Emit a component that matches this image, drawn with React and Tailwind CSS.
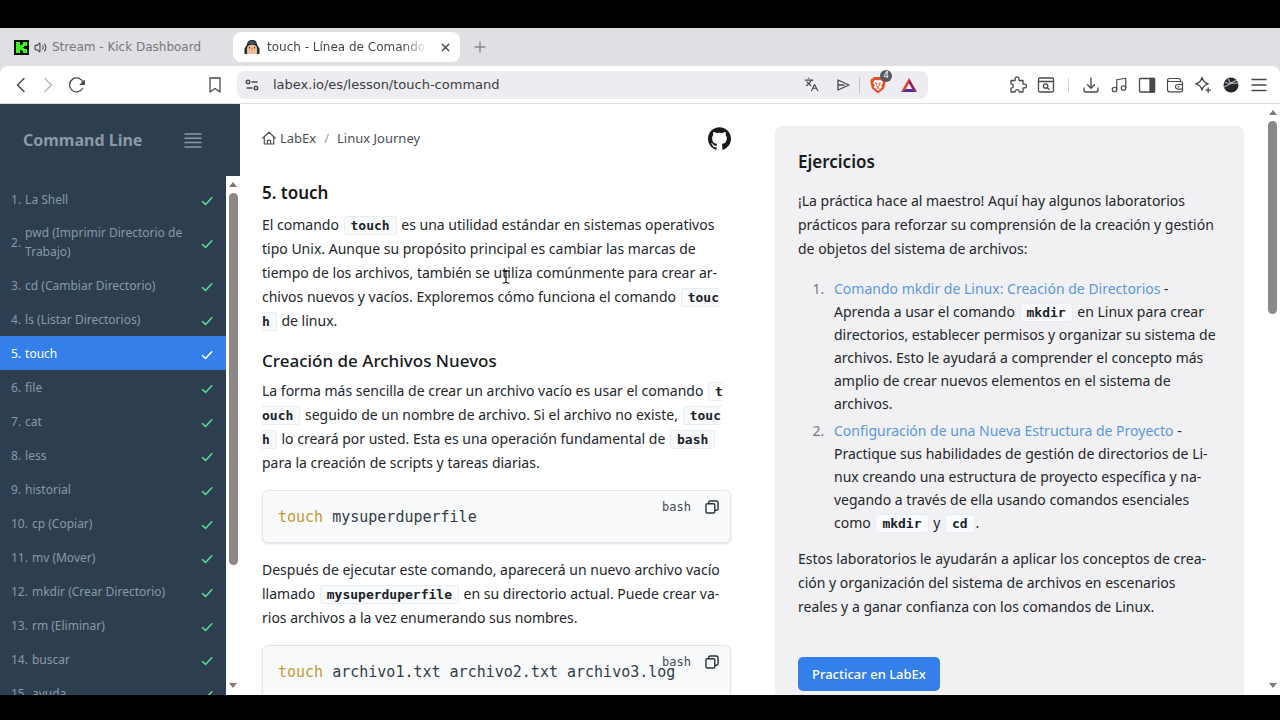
import { useState } from 'react';
import clsx from 'clsx';
import { Languages, Music, Volume2, X } from 'lucide-react';
import { SiGithub } from 'react-icons/si';

const lessons = [
  'La Shell',
  'pwd (Imprimir Directorio de Trabajo)',
  'cd (Cambiar Directorio)',
  'ls (Listar Directorios)',
  'touch',
  'file',
  'cat',
  'less',
  'historial',
  'cp (Copiar)',
  'mv (Mover)',
  'mkdir (Crear Directorio)',
  'rm (Eliminar)',
  'buscar',
  'ayuda',
];

const strokeProps = {
  fill: 'none',
  stroke: 'currentColor',
  strokeLinecap: 'round',
  strokeLinejoin: 'round',
  'aria-hidden': true,
};

function KickIcon() {
  return (
    <svg viewBox="0 0 15 15" className="size-[15px] shrink-0" shapeRendering="crispEdges" aria-hidden="true">
      <rect width="15" height="15" fill="#061206" />
      <g fill="#3fef1e">
        <rect x="2" y="2" width="4" height="11" />
        <rect x="6" y="5" width="3" height="5" />
        <rect x="8" y="4" width="2" height="3" />
        <rect x="8" y="8" width="2" height="3" />
        <rect x="9" y="2" width="4" height="4" />
        <rect x="9" y="9" width="4" height="4" />
      </g>
    </svg>
  );
}

function LabExIcon() {
  return (
    <svg viewBox="0 0 16 16" className="size-4 shrink-0" aria-hidden="true">
      <path d="M3 5.500C3 2.500 5 1 8 1s5 1.500 5 4.500l2.500 4V15H.5V9.500z" fill="#22282e" />
      <path d="M4 5c.5-2 2-3 4-3s3.500 1 4 3z" fill="#35586c" />
      <path d="M3 15V9.500C3 7.200 4.800 5.800 8 5.800s5 1.400 5 3.700V15z" fill="#f0bc98" />
      <path d="M6.800 9.500h2.400L8 11z" fill="#e0672b" />
      <circle cx="5.500" cy="8.700" r=".7" fill="#222" />
      <circle cx="10.500" cy="8.700" r=".7" fill="#222" />
    </svg>
  );
}

function BraveIcon() {
  return (
    <svg viewBox="0 0 16 18" className="h-[18px] w-4" aria-hidden="true">
      <path d="M4 1h8l1.500 1.500 1.500.5.800 2.500-1.800 7L8 17.500 2 12.500.2 5.500 1 3l1.500-.5z" fill="#e8502b" />
      <path d="M4.200 4.500l2.300-.5L8 4.500 9.500 4l2.300.5 1.200 2.300-1.800 2.700.8 2L8 14.700 4 11.500l.8-2L3 6.800z" fill="#fff" />
      <path d="M5 7l2 .5-.5 2L8 11l1.500-1.500-.5-2 2-.5M6.500 12.500L8 11.700l1.500.8" fill="none" stroke="#e8502b" />
    </svg>
  );
}

function BatIcon() {
  return (
    <svg viewBox="0 0 18 16" className="h-4 w-[18px]" aria-hidden="true">
      <path d="M9 1L1 15l4.800-3L9 6.200z" fill="#e0402c" />
      <path d="M9 1l8 14-4.800-3L9 6.200z" fill="#8e2060" />
      <path d="M1 15h16l-4.800-3H5.800z" fill="#5a2a92" />
    </svg>
  );
}

function PuzzleIcon() {
  return (
    <svg viewBox="0 0 18 18" className="size-[18px]" strokeWidth="1.300" {...strokeProps}>
      <path d="M2 4.500h3.700c.6 0 .6-.7.500-1.200a1.900 1.900 0 1 1 3.700 0c-.1.500 0 1.200.6 1.200H14v3.200c0 .6.700.6 1.200.5a1.900 1.900 0 1 1 0 3.700c-.5-.1-1.200 0-1.200.6V16h-3.300c-.6 0-.6-.5-.6-.9a1.900 1.900 0 0 0-3.700 0c0 .4-.1.900-.7.900H2v-3.500c0-.6.500-.6.900-.6a1.900 1.900 0 0 0 0-3.700c-.4 0-.9 0-.9-.6z" />
    </svg>
  );
}

function FindIcon() {
  return (
    <svg viewBox="0 0 18 18" className="size-[18px]" strokeWidth="1.300" {...strokeProps}>
      <rect x="1.500" y="2" width="15" height="14" rx="1.500" />
      <path d="M1.500 5.500h15M10.200 11.700l1.800 1.800" />
      <circle cx="8.600" cy="10" r="2.200" />
    </svg>
  );
}

function DownloadIcon() {
  return (
    <svg viewBox="0 0 18 18" className="size-[18px]" strokeWidth="1.300" {...strokeProps}>
      <path d="M9 2v10M5.500 8.700L9 12.200l3.500-3.500M2 12v2c0 1.300.7 2 2 2h10c1.300 0 2-.7 2-2v-2" />
    </svg>
  );
}

function SidePanelIcon() {
  return (
    <svg viewBox="0 0 18 18" className="size-[18px]" strokeWidth="1.300" {...strokeProps}>
      <rect x="1.500" y="2.500" width="15" height="13.500" rx="1" />
      <rect x="12" y="2.500" width="4.500" height="13.500" fill="currentColor" />
    </svg>
  );
}

function WalletIcon() {
  return (
    <svg viewBox="0 0 18 18" className="size-[18px]" strokeWidth="1.200" {...strokeProps}>
      <path d="M14.500 5.500V4.500c0-1.300-.8-2-2-2h-9C2.400 2.500 1.500 3.200 1.500 4.200v9.300c0 1.400.8 2.300 2.200 2.300H15c1 0 1.500-.6 1.500-1.500V7c0-1-.5-1.500-1.500-1.500H3.300c-1 0-1.600-.5-1.800-1.300" />
      <path d="M16.500 8.500h-4.700a2.300 2.300 0 1 0 0 4.600h4.700M12 10.800h1" />
    </svg>
  );
}

function SparkleIcon() {
  return (
    <svg viewBox="0 0 18 18" className="size-[18px]" strokeWidth="1.300" {...strokeProps}>
      <path d="M8 1.500c.8 3.600 2.400 5.300 6.200 6.300-3.800 1-5.400 2.700-6.200 6.300-.8-3.600-2.400-5.300-6.200-6.300C5.600 6.800 7.200 5.100 8 1.500zM14.200 12v4.400M12 14.200h4.400" />
    </svg>
  );
}

function AvatarIcon() {
  return (
    <svg viewBox="0 0 18 18" className="size-[18px]" aria-hidden="true">
      <circle cx="9" cy="9" r="7.500" fill="#26282b" />
      <path d="M2.500 6.500L8 7.500l7-3.500M2 11l7-3.500 7-.5M6 3l3 4.500" fill="none" stroke="#b9bcc0" strokeWidth="1.100" />
    </svg>
  );
}

function CheckIcon() {
  return (
    <svg viewBox="0 0 12 12" className="size-3 shrink-0" strokeWidth="1.500" {...strokeProps}>
      <path d="M1.500 6.500l3 3 6.300-6.700" />
    </svg>
  );
}

function Toolbar() {
  return (
    <div className="flex h-[38px] shrink-0 items-center rounded-t-lg border-b border-[#dedee0] bg-white text-[#46484d]">
      <div className="flex w-[237px] shrink-0 items-center gap-3 pl-3">
        <button type="button" aria-label="Back">
          <svg viewBox="0 0 18 18" className="size-[18px]" strokeWidth="1.500" {...strokeProps}>
            <path d="M12 2.500L5.500 9l6.500 6.500" />
          </svg>
        </button>
        <button type="button" aria-label="Forward" className="-ml-1 text-[#b7b8bc]">
          <svg viewBox="0 0 18 18" className="size-[18px]" strokeWidth="1.500" {...strokeProps}>
            <path d="M7 2.500L13.500 9 7 15.500" />
          </svg>
        </button>
        <button type="button" aria-label="Reload">
          <svg viewBox="0 0 18 18" className="size-[18px]" strokeWidth="1.300" {...strokeProps}>
            <path d="M14.600 12.500A7 7 0 1 1 15.300 7" />
            <path d="M16.500 4.500v4h-4z" fill="currentColor" strokeWidth="1" />
          </svg>
        </button>
        <button type="button" aria-label="Bookmark" className="mr-[13px] ml-auto">
          <svg viewBox="0 0 18 18" className="size-[18px]" strokeWidth="1.300" {...strokeProps}>
            <path d="M4 2h10v14l-5-3.500L4 16z" />
          </svg>
        </button>
      </div>
      <div className="flex h-7 w-[691px] min-w-0 items-center rounded-lg bg-[#ededf1] pr-2.5 pl-2">
        <svg viewBox="0 0 14 14" className="size-[14px] shrink-0" strokeWidth="1.400" {...strokeProps}>
          <circle cx="3" cy="4" r="1.800" />
          <path d="M7 4h5M2 10h5" />
          <circle cx="11" cy="10" r="1.800" />
        </svg>
        <input
          aria-label="Address"
          defaultValue="labex.io/es/lesson/touch-command"
          className="ml-3.5 min-w-0 flex-1 bg-transparent font-['DejaVu_Sans'] text-[13px] text-[#3a3c41] outline-none"
        />
        <div className="flex items-center">
          <button type="button" aria-label="Translate" className="mr-4">
            <Languages size={15} strokeWidth={1.8} />
          </button>
          <button type="button" aria-label="Share">
            <svg viewBox="0 0 16 16" className="size-4" strokeWidth="1.300" {...strokeProps}>
              <path d="M3 3l11 5-11 5zM3 8h6" />
            </svg>
          </button>
          <div className="mx-2 h-4 w-px bg-[#c3c3c8]" />
          <button type="button" aria-label="Shields" className="relative ml-0.5">
            <BraveIcon />
            <span className="absolute -top-1.5 -right-1.5 flex size-3 items-center justify-center rounded-full bg-[#56585e] font-['DejaVu_Sans'] text-[9px] text-white">
              4
            </span>
          </button>
          <button type="button" aria-label="Rewards" className="ml-3.5">
            <BatIcon />
          </button>
        </div>
      </div>
      <div className="ml-auto flex shrink-0 items-center gap-2.5 pr-3">
        <button type="button" aria-label="Extensions"><PuzzleIcon /></button>
        <button type="button" aria-label="Find"><FindIcon /></button>
        <div className="mx-[3px] h-3.5 w-px bg-[#d0d0d4]" />
        <button type="button" aria-label="Downloads"><DownloadIcon /></button>
        <button type="button" aria-label="Media"><Music size={18} strokeWidth={1.600} /></button>
        <button type="button" aria-label="Side panel"><SidePanelIcon /></button>
        <button type="button" aria-label="Wallet"><WalletIcon /></button>
        <button type="button" aria-label="Assistant"><SparkleIcon /></button>
        <button type="button" aria-label="Profile"><AvatarIcon /></button>
        <button type="button" aria-label="Menu">
          <svg viewBox="0 0 18 18" className="size-[18px]" strokeWidth="1.400" {...strokeProps}>
            <path d="M2 3.500h14M2 9h14M2 14.500h14" />
          </svg>
        </button>
      </div>
    </div>
  );
}

function BrowserTabs() {
  return (
    <div className="flex h-[38px] shrink-0 items-center font-['DejaVu_Sans'] text-xs">
      <button type="button" className="flex h-[30px] w-[233px] items-center pl-3.5 text-[#77787d]">
        <KickIcon />
        <Volume2 size={13} strokeWidth={2} className="mx-[5px] text-[#46484d]" />
        Stream - Kick Dashboard
      </button>
      <div className="flex h-[30px] w-[227px] items-center rounded-lg bg-white pr-2 pl-[11px] text-[#46484d]">
        <LabExIcon />
        <span className="ml-[7px] flex-1 overflow-hidden whitespace-nowrap mask-r-from-85%">
          touch - Línea de Comando
        </span>
        <button type="button" aria-label="Close tab" className="ml-3">
          <X size={13} strokeWidth={2.500} />
        </button>
      </div>
      <button type="button" aria-label="New tab" className="ml-3.5 text-[#8b8c91]">
        <svg viewBox="0 0 12 12" className="size-3" strokeWidth="1.500" {...strokeProps}>
          <path d="M6 1v10M1 6h10" />
        </svg>
      </button>
    </div>
  );
}

function Arrow({ down }) {
  return (
    <svg viewBox="0 0 8 5" className={clsx('h-[5px] w-2', down && 'rotate-180')} aria-hidden="true">
      <path d="M0 5l4-5 4 5z" fill="#7c7b7a" />
    </svg>
  );
}

function Scrollbar({ width, thumb }) {
  return (
    <div className={clsx('flex shrink-0 flex-col items-center bg-white pt-1.5 pb-[7px]', width)} aria-hidden="true">
      <Arrow />
      <div className={clsx('mt-1.5 w-[9px] rounded-full bg-[#8a8988]', thumb)} />
      <div className="flex-1" />
      <Arrow down />
    </div>
  );
}

function Sidebar() {
  const [active, setActive] = useState(4);

  return (
    <aside className="flex w-60 shrink-0 flex-col bg-[#2c3e50] text-[#8b99a7]">
      <div className="flex h-[72px] shrink-0 items-center justify-between pr-[38px] pl-[23px]">
        <h1 className="text-base font-bold">Command Line</h1>
        <button type="button" aria-label="Toggle list">
          <svg viewBox="0 0 18 15" className="h-[15px] w-[18px]" strokeWidth="1.500" {...strokeProps}>
            <path d="M1 1h16M1 5.300h16M1 9.600h16M1 14h16" />
          </svg>
        </button>
      </div>
      <div className="flex min-h-0 flex-1">
        <nav className="min-w-0 flex-1 overflow-hidden pt-1.5">
          {lessons.map((title, i) => (
            <a
              key={title}
              href="#leccion"
              onClick={() => setActive(i)}
              className={clsx(
                'flex min-h-[34px] items-center py-[7px] pr-[13px] pl-[11px] text-xs leading-[19px]',
                i === active ? 'bg-[#347fe9] text-white' : 'text-[#8b99a7]',
              )}
            >
              <span className="mr-1">{i + 1}.</span>
              <span className="flex-1">{title}</span>
              <span className={clsx('mt-1', i === active ? 'text-white' : 'text-[#5fe09a]')}>
                <CheckIcon />
              </span>
            </a>
          ))}
        </nav>
        <Scrollbar width="w-3.5" thumb="h-[372px]" />
      </div>
    </aside>
  );
}

function Code({ children }) {
  return (
    <code className="mx-px rounded-[3px] border border-[#e6edf4] bg-[#f8fafc] px-1.5 py-px font-['DejaVu_Sans_Mono'] text-[13px] leading-4 font-bold text-[#1b2229]">
      {children}
    </code>
  );
}

function CodeBlock({ children }) {
  return (
    <div className="relative my-[15px] h-[53px] rounded-md border border-[#e3e7ec] bg-[#f8fafc] shadow-sm">
      <pre className="px-[15px] pt-4 font-['DejaVu_Sans_Mono'] text-[15px] leading-5 text-[#333b45]">
        <span className="text-[#c39b32]">touch</span> {children}
      </pre>
      <div className="absolute top-2 right-[11px] flex items-center gap-3.5 font-['DejaVu_Sans_Mono'] text-xs leading-4 text-[#444b54]">
        bash
        <button type="button" aria-label="Copiar" className="text-[#2b3139]">
          <svg viewBox="0 0 15 15" className="size-[14px]" strokeWidth="1.500" {...strokeProps}>
            <rect x="1" y="4" width="9.500" height="10" rx="1.500" />
            <path d="M4 3.500V2.500C4 1.500 4.500 1 5.500 1H12c1.300 0 2 .7 2 2v6.500c0 1-.6 1.500-1.500 1.500H11" />
          </svg>
        </button>
      </div>
    </div>
  );
}

function Article() {
  return (
    <article className="min-w-0 text-sm leading-6 text-[#24272b]">
      <div className="flex h-6 items-center text-[13px] text-[#4b5057]">
        <a href="#inicio" className="flex items-center gap-1">
          <svg viewBox="0 0 14 14" className="size-[14px]" strokeWidth="1.200" {...strokeProps}>
            <path d="M.8 7L7 1.200 13.200 7M2.300 6v7h9.400V6M5.400 13V9.300h3.200V13" />
          </svg>
          LabEx
        </a>
        <span className="mx-2 text-[#9a9ea4]">/</span>
        <a href="#linux">Linux Journey</a>
        <a href="#github" aria-label="GitHub" className="ml-auto text-[#17191c]">
          <SiGithub size={23} />
        </a>
      </div>

      <h2 className="mt-[31px] mb-2 text-[17px] leading-6 font-semibold text-[#17191c]">5. touch</h2>
      <p>
        El comando <Code>touch</Code> es una utilidad estándar en sistemas operativos
        <br />
        tipo Unix. Aunque su propósito principal es cambiar las marcas de
        <br />
        tiempo de los archivos, también se utiliza comúnmente para crear ar-
        <br />
        chivos nuevos y vacíos. Exploremos cómo funciona el comando <Code>touc<br />h</Code> de linux.
      </p>

      <h3 className="mt-4 mb-1.5 text-[17px] leading-6 font-medium text-[#17191c]">Creación de Archivos Nuevos</h3>
      <p>
        La forma más sencilla de crear un archivo vacío es usar el comando <Code>t<br />ouch</Code> seguido de un
        nombre de archivo. Si el archivo no existe, <Code>touc<br />h</Code> lo creará por usted. Esta es una
        operación fundamental de <Code>bash</Code>
        <br />
        para la creación de scripts y tareas diarias.
      </p>

      <CodeBlock>mysuperduperfile</CodeBlock>
      <p>
        Después de ejecutar este comando, aparecerá un nuevo archivo vacío
        <br />
        llamado <Code>mysuperduperfile</Code> en su directorio actual. Puede crear va-
        <br />
        rios archivos a la vez enumerando sus nombres.
      </p>
      <CodeBlock>archivo1.txt archivo2.txt archivo3.log</CodeBlock>
    </article>
  );
}

function Exercises() {
  return (
    <section className="min-w-0 rounded-t-lg bg-[#f1f1f3] px-[23px] pt-6 text-sm leading-6 text-[#24272b]">
      <h2 className="mb-[15px] text-[17px] leading-6 font-semibold text-[#17191c]">Ejercicios</h2>
      <p>
        ¡La práctica hace al maestro! Aquí hay algunos laboratorios
        <br />
        prácticos para reforzar su comprensión de la creación y gestión
        <br />
        de objetos del sistema de archivos:
      </p>
      <ol className="mt-4 list-decimal pl-[30px] leading-[23px] marker:text-[#74787e]">
        <li className="mb-1 pl-1.5">
          <a href="#mkdir" className="text-[#5b98de]">Comando mkdir de Linux: Creación de Directorios</a> -
          <br />
          Aprenda a usar el comando <Code>mkdir</Code> en Linux para crear
          <br />
          directorios, establecer permisos y organizar su sistema de
          <br />
          archivos. Esto le ayudará a comprender el concepto más
          <br />
          amplio de crear nuevos elementos en el sistema de
          <br />
          archivos.
        </li>
        <li className="pl-1.5">
          <a href="#proyecto" className="text-[#5b98de]">Configuración de una Nueva Estructura de Proyecto</a> -
          <br />
          Practique sus habilidades de gestión de directorios de Li-
          <br />
          nux creando una estructura de proyecto específica y na-
          <br />
          vegando a través de ella usando comandos esenciales
          <br />
          como <Code>mkdir</Code> y <Code>cd</Code>.
        </li>
      </ol>
      <p className="mt-[13px]">
        Estos laboratorios le ayudarán a aplicar los conceptos de crea-
        <br />
        ción y organización del sistema de archivos en escenarios
        <br />
        reales y a ganar confianza con los comandos de Linux.
      </p>
      <button type="button" className="mt-[38px] h-[34px] rounded-[5px] bg-[#347fe9] px-3.5 text-[13px] font-medium text-white">
        Practicar en LabEx
      </button>
    </section>
  );
}

export default function App() {
  return (
    <div className="h-screen bg-black pt-7 pb-[25px] font-['Noto_Sans',sans-serif]">
      <div className="flex h-full flex-col overflow-hidden bg-[#dfdfe4]">
        <BrowserTabs />
        <Toolbar />
        <div className="relative flex min-h-0 flex-1 bg-white">
          <Sidebar />
          <main className="grid min-w-0 flex-1 grid-cols-2 gap-11 overflow-hidden pt-[22px] pr-[21px] pl-[22px]">
            <Article />
            <Exercises />
          </main>
          <Scrollbar width="w-[15px]" thumb="h-[193px]" />
          {/* text pointer */}
          <svg viewBox="0 0 8 14" className="absolute top-[166px] left-[502px] h-3.5 w-2" strokeWidth="1" {...strokeProps}>
            <path d="M1 1h2l1 1 1-1h2M4 2v10M1 13h2l1-1 1 1h2" />
          </svg>
        </div>
      </div>
    </div>
  );
}
